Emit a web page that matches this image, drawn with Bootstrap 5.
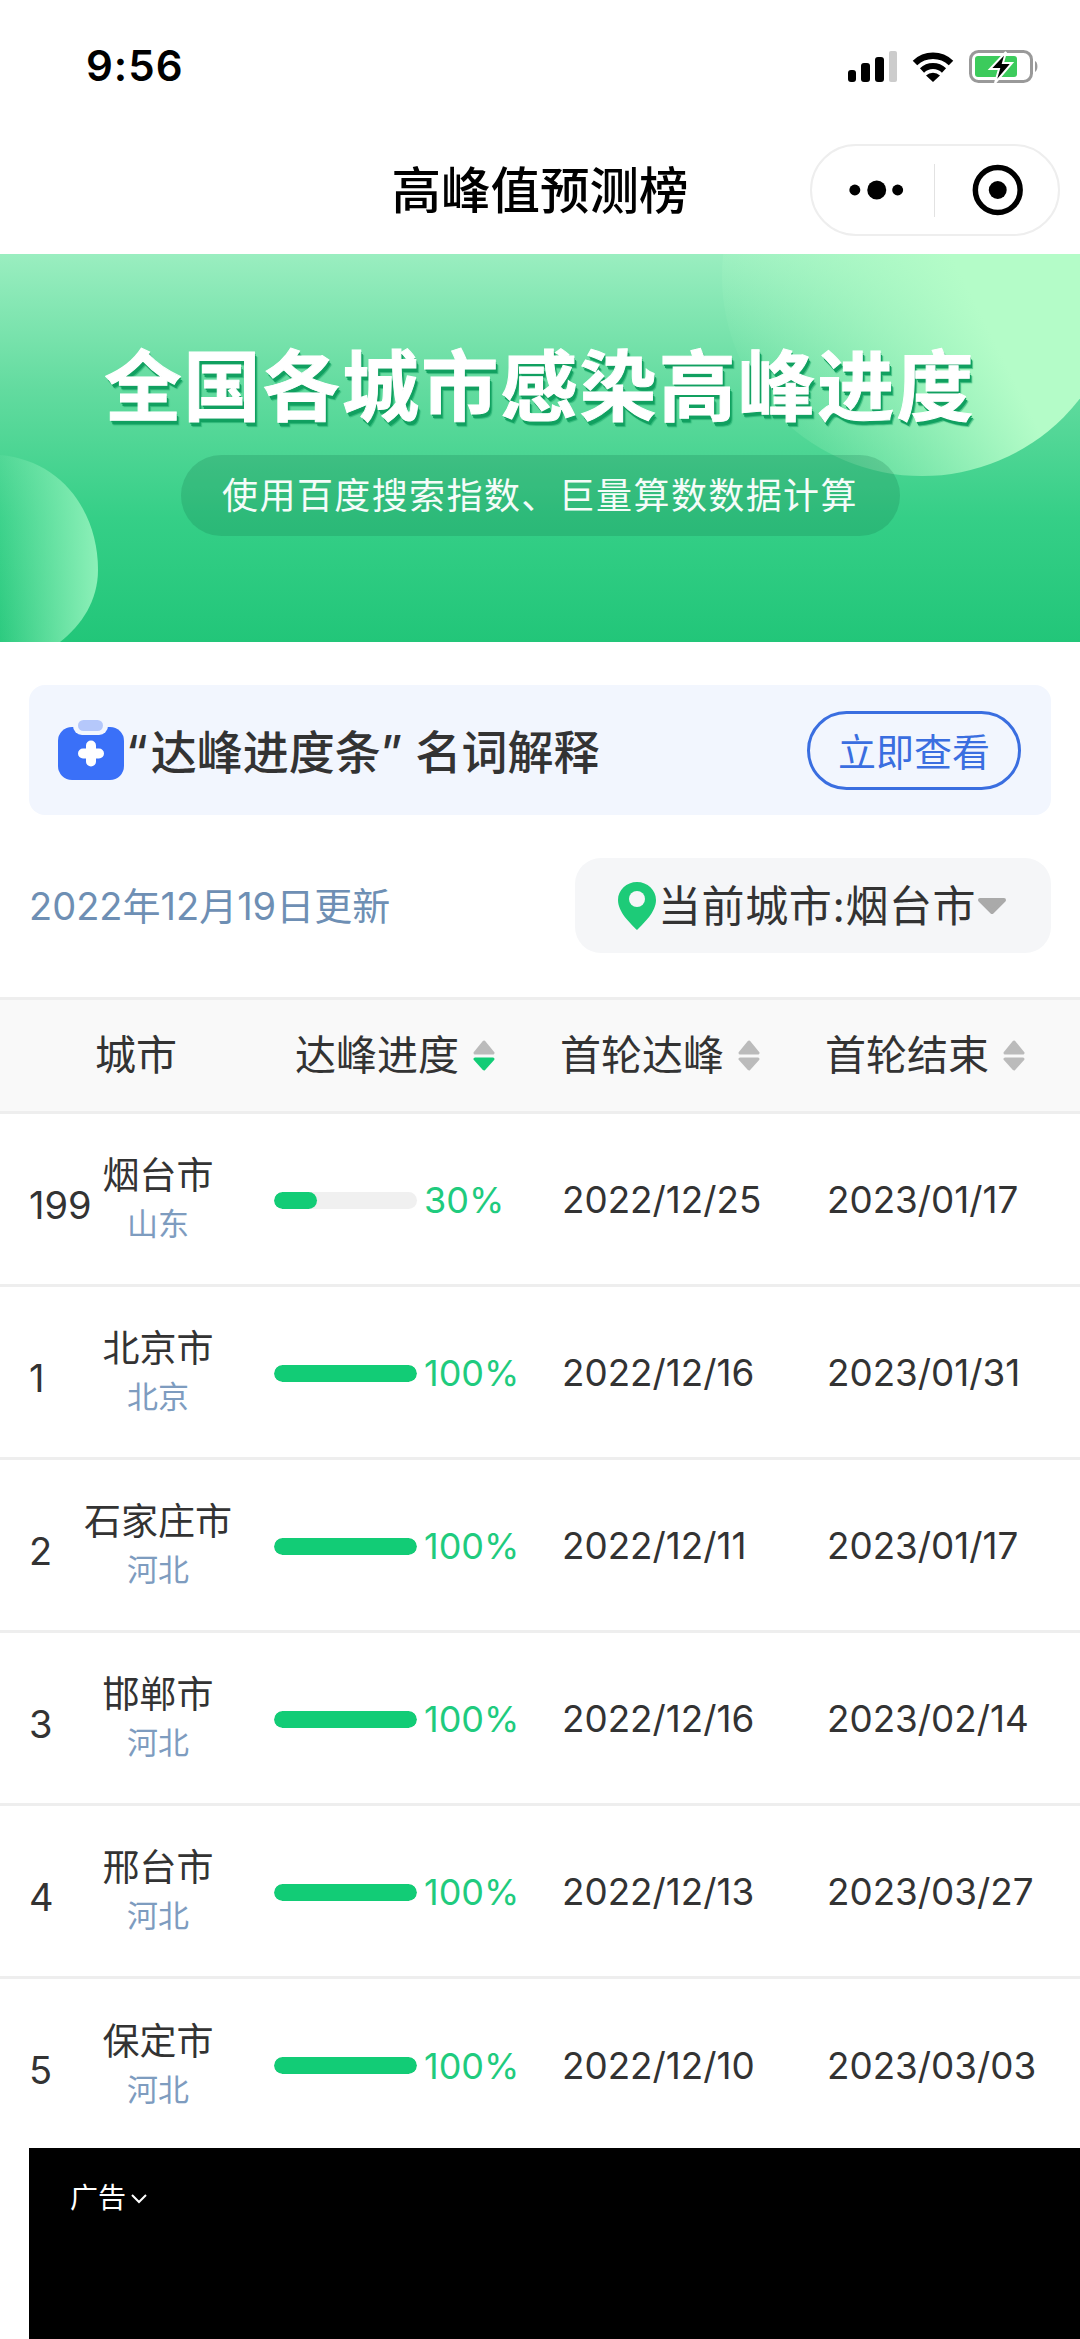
<!DOCTYPE html>
<html lang="zh-CN">
<head>
<meta charset="UTF-8">
<meta name="viewport" content="width=device-width, initial-scale=1.0">
<title>高峰值预测榜</title>
<link href="https://cdn.jsdelivr.net/npm/bootstrap@5.3.0/dist/css/bootstrap.min.css" rel="stylesheet">
<style>
body { margin: 0; background: #fff; color: #333; font-family: Inter, "Noto Sans CJK SC", sans-serif; }
.phone { width: 1080px; height: 2339px; overflow: hidden; }
.status-bar { height: 110px; padding: 0 41px 0 86px; }
.status-time { font-weight: 600; font-size: 42px; letter-spacing: 1px; color: #000; line-height: 1; margin-top: 45px; }
.status-icons { gap: 15px; margin-top: 51px; }
.nav-head { height: 144px; padding-top: 34px; padding-right: 20px; }
.nav-title { font-size: 49.5px; font-weight: 500; color: #000; line-height: 92px; left: 0; right: 0; top: 35px; text-align: center; }
.capsule { width: 250px; height: 92px; border: 2px solid #eee; border-radius: 46px; margin-left: auto; }
.capsule-line { width: 2px; height: 53px; background: #e2e2e2; }
.banner { height: 388px; padding-top: 87px; background: linear-gradient(180deg, #9aeec0 0%, #62db9f 35%, #35cf87 68%, #22c679 100%); }
.banner-art { left: 0; top: 0; }
.banner-title { font-size: 77px; font-weight: 700; letter-spacing: 2.2px; line-height: 90px; margin-top: 1px; margin-bottom: -1px; color: #fff; -webkit-text-stroke: 1px #fff; text-shadow: 1px 2px 0 #11a060, 2px 4px 0 #11a060, 3px 5px 1px rgba(17,160,96,.6); }
.banner-sub { width: 719px; height: 81px; margin-top: 24px; border-radius: 41px; background: rgba(20,110,75,.22); color: #fff; font-size: 36px; letter-spacing: 1.4px; opacity: .95; }
.explain-box { height: 130px; margin: 43px 29px 0; padding: 0 30px 0 29px; background: #f2f6fe; border-radius: 16px; }
.explain-title { font-size: 46px; font-weight: 500; margin-left: 2px; padding-top: 5px; color: #333; }
.quote-open { margin-right: 3px; }
.quote-close { margin-right: 13px; }
.look-btn { width: 214px; height: 79px; padding: 3px 0 0; border: 3px solid #3a6ee0; color: #3a6ee0; font-size: 38px; line-height: 1; background: transparent; }
.filter-row { height: 95px; margin: 43px 29px 0; }
.update-date { font-size: 38px; color: #6e8fb4; padding-top: 2px; }
.city-pick { width: 476px; height: 95px; padding-left: 43px; background: #f5f6f8; border-radius: 26px; font-size: 43px; color: #333; }
.city-pick span { margin: 0 1px 0 2px; padding-top: 2px; letter-spacing: .6px; }
.rank-table { margin: 44px 0 0; table-layout: fixed; width: 1080px; }
.rank-table th, .rank-table td { padding: 0; vertical-align: middle; border-bottom: 3px solid #eee; color: #333; font-weight: 400; background: transparent; box-shadow: none; }
.rank-table thead tr { border-top: 3px solid #eee; }
.rank-table tbody tr:last-child td { border-bottom: 0; }
.rank-table th { height: 114px; background: #f9f9f9; font-size: 41px; }
.rank-table td { height: 173px; font-size: 36.8px; padding-top: 2px; }
.th-city { padding-left: 95px !important; }
.th-inner { gap: 13px; }
.th-bar { padding-left: 21px; }
.th-first { margin-left: -3px; }
.th-end { margin-left: -2px; }
.cell-first { margin-left: -1px; }
.rank-no { width: 54px; padding-left: 29px; box-sizing: content-box; font-size: 38px; padding-top: 10px; }
.city-cell { width: 150px; text-align: center; line-height: 48px; white-space: nowrap; }
.city-name { font-size: 37px; color: #333; }
.city-prov { font-size: 31px; color: #7e9cbf; }
.bar-track { width: 143px; height: 17px; background: #f0f0f0; border-radius: 9px; overflow: hidden; }
.bar-fill { height: 100%; background: #12cc76; border-radius: 9px; }
.bar-text { margin-left: 7px; font-size: 36px; color: #1fcb7e; }
.ad-panel { left: 29px; right: 0; bottom: 0; height: 191px; background: #000; color: #fff; padding: 34px 0 0 41px; font-size: 28px; line-height: 1.2; }
</style>
</head>
<body>
<div class="phone position-relative">

    <!-- status bar -->
    <div class="status-bar d-flex justify-content-between align-items-start">
        <div class="status-time">9:56</div>
        <div class="status-icons d-flex align-items-start">
            <svg width="49" height="31" viewBox="0 0 49 31"><rect x="0" y="19" width="8" height="12" rx="3"/><rect x="13" y="12" width="9" height="19" rx="3"/><rect x="27" y="6" width="9" height="25" rx="3"/><rect x="41" y="0" width="8" height="31" rx="2" fill="#ccc"/></svg>
            <svg width="42" height="31" viewBox="0 0 42 31"><path d="M3 12A26 26 0 0 1 39 12" fill="none" stroke="#000" stroke-width="6.5"/><path d="M10 19.5A16 16 0 0 1 32 19.5" fill="none" stroke="#000" stroke-width="6"/><path d="M21 31L14 24.5A10 10 0 0 1 28 24.5Z"/></svg>
            <svg width="70" height="34" viewBox="0 0 70 34" style="margin-top:-1px"><rect x="1.5" y="1.5" width="61" height="30" rx="8" fill="none" stroke="#999" stroke-width="3"/><rect x="6" y="6" width="42" height="21" rx="3" fill="#3ccb5c"/><path d="M66 11c3 1 3.500 9 0 11z" fill="#999"/><path d="M37 2L21 19h9l-4 14 17-20h-9z" fill="#000" stroke="#fff" stroke-width="2"/></svg>
        </div>
    </div>

    <!-- title bar -->
    <div class="nav-head position-relative">
        <div class="nav-title position-absolute">高峰值预测榜</div>
        <div class="capsule d-flex align-items-center position-relative">
            <svg width="122" height="30" viewBox="0 0 122 30"><circle cx="43" cy="15" r="5.500"/><circle cx="65" cy="15" r="9.500"/><circle cx="86" cy="15" r="5.500"/></svg>
            <div class="capsule-line"></div>
            <svg width="123" height="60" viewBox="0 0 123 60"><circle cx="63" cy="30" r="22.500" fill="none" stroke="#000" stroke-width="5.500"/><circle cx="63" cy="30" r="9"/></svg>
        </div>
    </div>

    <!-- banner -->
    <div class="banner position-relative d-flex flex-column align-items-center overflow-hidden">
        <svg class="banner-art position-absolute" width="1080" height="388" viewBox="0 0 1080 388">
            <defs>
                <linearGradient id="blobA" x1="0" y1="0.7" x2="0.8" y2="0.3"><stop offset="0" stop-color="#b4fcc8" stop-opacity="0"/><stop offset="0.7" stop-color="#b4fcc8"/></linearGradient>
                <linearGradient id="blobB" x1="1" y1="0.5" x2="0" y2="0.5"><stop offset="0" stop-color="#8cf0b8"/><stop offset="1" stop-color="#8cf0b8" stop-opacity="0.1"/></linearGradient>
            </defs>
            <circle cx="922" cy="22" r="200" fill="url(#blobA)"/>
            <path d="M0 201C60 206 98 256 98 316C98 346 82 371 60 388L0 388Z" fill="url(#blobB)"/>
        </svg>
        <div class="banner-title position-relative">全国各城市感染高峰进度</div>
        <div class="banner-sub position-relative d-flex align-items-center justify-content-center">使用百度搜索指数、巨量算数数据计算</div>
    </div>

    <!-- explain -->
    <div class="explain-box d-flex align-items-center justify-content-between">
        <div class="d-flex align-items-center">
            <svg width="66" height="60" viewBox="0 0 66 60"><rect x="0" y="7" width="66" height="53" rx="14" fill="#3a70f8"/><rect x="15" y="-4" width="35" height="19" rx="9" fill="#f2f6fe"/><rect x="20" y="0" width="25" height="11" rx="5.500" fill="#b5c8fb"/><path d="M33 25.500v16M25 33.500h16" stroke="#fff" stroke-width="10" stroke-linecap="round"/></svg>
            <div class="explain-title"><span class="quote-open">“</span>达峰进度条<span class="quote-close">”</span>名词解释</div>
        </div>
        <button type="button" class="btn rounded-pill look-btn">立即查看</button>
    </div>

    <!-- date / city -->
    <div class="filter-row d-flex align-items-center justify-content-between">
        <div class="update-date">2022年12月19日更新</div>
        <div class="city-pick d-flex align-items-center">
            <svg width="38" height="48" viewBox="0 0 38 48"><path d="M19 0C8.500 0 0 8 0 18C0 30 12 41 19 48C26 41 38 30 38 18C38 8 29.500 0 19 0Z" fill="#1dcb78"/><circle cx="19" cy="17" r="8" fill="#f5f6f8"/></svg>
            <span>当前城市:烟台市</span>
            <svg width="30" height="18" viewBox="0 0 30 18"><path d="M3 3H27L15 15Z" fill="#aaa" stroke="#aaa" stroke-width="4" stroke-linejoin="round"/></svg>
        </div>
    </div>

    <!-- list -->
    <table class="table rank-table">
        <colgroup><col style="width:274px"><col style="width:289px"><col style="width:264px"><col style="width:253px"></colgroup>
        <thead>
            <tr>
                <th class="th-city">城市</th>
                <th><div class="th-inner th-bar d-flex align-items-center">达峰进度<svg width="24" height="31" viewBox="0 0 24 31"><path d="M12 2L21 13H3Z" fill="#bbb" stroke="#bbb" stroke-width="3" stroke-linejoin="round"/><path d="M3 19H21L12 29Z" fill="#12cc76" stroke="#12cc76" stroke-width="3" stroke-linejoin="round"/></svg></div></th>
                <th><div class="th-inner th-first d-flex align-items-center">首轮达峰<svg width="24" height="31" viewBox="0 0 24 31"><path d="M12 2L21 13H3Z" fill="#bbb" stroke="#bbb" stroke-width="3" stroke-linejoin="round"/><path d="M3 19H21L12 29Z" fill="#bbb" stroke="#bbb" stroke-width="3" stroke-linejoin="round"/></svg></div></th>
                <th><div class="th-inner th-end d-flex align-items-center">首轮结束<svg width="24" height="31" viewBox="0 0 24 31"><path d="M12 2L21 13H3Z" fill="#bbb" stroke="#bbb" stroke-width="3" stroke-linejoin="round"/><path d="M3 19H21L12 29Z" fill="#bbb" stroke="#bbb" stroke-width="3" stroke-linejoin="round"/></svg></div></th>
            </tr>
        </thead>
        <tbody>
            <tr>
                <td><div class="d-flex align-items-center"><div class="rank-no">199</div><div class="city-cell"><div class="city-name">烟台市</div><div class="city-prov">山东</div></div></div></td>
                <td><div class="d-flex align-items-center"><div class="bar-track"><div class="bar-fill" style="width:30%"></div></div><div class="bar-text">30%</div></div></td>
                <td><div class="cell-first">2022/12/25</div></td>
                <td>2023/01/17</td>
            </tr>
            <tr>
                <td><div class="d-flex align-items-center"><div class="rank-no">1</div><div class="city-cell"><div class="city-name">北京市</div><div class="city-prov">北京</div></div></div></td>
                <td><div class="d-flex align-items-center"><div class="bar-track"><div class="bar-fill" style="width:100%"></div></div><div class="bar-text">100%</div></div></td>
                <td><div class="cell-first">2022/12/16</div></td>
                <td>2023/01/31</td>
            </tr>
            <tr>
                <td><div class="d-flex align-items-center"><div class="rank-no">2</div><div class="city-cell"><div class="city-name">石家庄市</div><div class="city-prov">河北</div></div></div></td>
                <td><div class="d-flex align-items-center"><div class="bar-track"><div class="bar-fill" style="width:100%"></div></div><div class="bar-text">100%</div></div></td>
                <td><div class="cell-first">2022/12/11</div></td>
                <td>2023/01/17</td>
            </tr>
            <tr>
                <td><div class="d-flex align-items-center"><div class="rank-no">3</div><div class="city-cell"><div class="city-name">邯郸市</div><div class="city-prov">河北</div></div></div></td>
                <td><div class="d-flex align-items-center"><div class="bar-track"><div class="bar-fill" style="width:100%"></div></div><div class="bar-text">100%</div></div></td>
                <td><div class="cell-first">2022/12/16</div></td>
                <td>2023/02/14</td>
            </tr>
            <tr>
                <td><div class="d-flex align-items-center"><div class="rank-no">4</div><div class="city-cell"><div class="city-name">邢台市</div><div class="city-prov">河北</div></div></div></td>
                <td><div class="d-flex align-items-center"><div class="bar-track"><div class="bar-fill" style="width:100%"></div></div><div class="bar-text">100%</div></div></td>
                <td><div class="cell-first">2022/12/13</div></td>
                <td>2023/03/27</td>
            </tr>
            <tr>
                <td><div class="d-flex align-items-center"><div class="rank-no">5</div><div class="city-cell"><div class="city-name">保定市</div><div class="city-prov">河北</div></div></div></td>
                <td><div class="d-flex align-items-center"><div class="bar-track"><div class="bar-fill" style="width:100%"></div></div><div class="bar-text">100%</div></div></td>
                <td><div class="cell-first">2022/12/10</div></td>
                <td>2023/03/03</td>
            </tr>
        </tbody>
    </table>

    <!-- ad floats over the end of the list -->
    <div class="ad-panel position-absolute d-flex align-items-start">
        <span>广告</span>
        <svg class="ms-1 mt-2" width="18" height="18" viewBox="0 0 18 18"><path d="M2 5L9 12L16 5" fill="none" stroke="#fff" stroke-width="2"/></svg>
    </div>
</div>
<script src="https://cdn.jsdelivr.net/npm/bootstrap@5.3.0/dist/js/bootstrap.bundle.min.js"></script>
</body>
</html>
